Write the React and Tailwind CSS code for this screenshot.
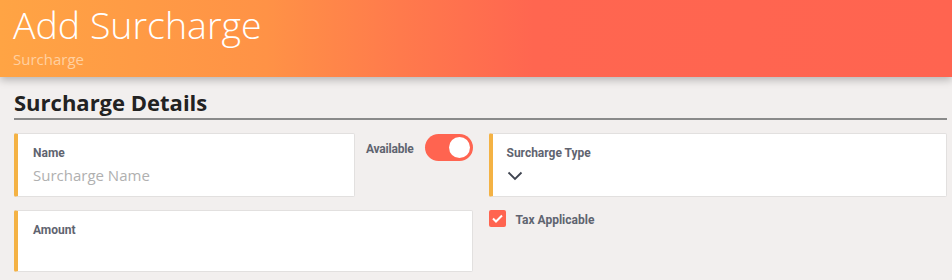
export default function App() {
  return (
    <div className="w-[952px] h-[280px] bg-[#f2efee] overflow-hidden font-['Open_Sans',sans-serif]">
      <div className="h-[77px] bg-[linear-gradient(90deg,#ffa444_0%,#ff9246_28%,#ff7a4c_42%,#ff6650_56%,#ff6450_100%)] shadow-[0_3px_8px_rgba(0,0,0,0.25)] px-[13px] pt-[6px] relative z-10">
        <h1 className="text-[37.5px] font-light text-white leading-[38px]">Add Surcharge</h1>
        <div className="text-[15px] text-[#ffd0a0] leading-[18px] mt-[6px]">Surcharge</div>
      </div>

      <div className="pl-[14px] pr-[5px] pt-[12px]">
        <h2 className="text-[22px] font-bold text-[#222] leading-[27px] pb-[2px] border-b-2 border-[#8a8a8a]">
          Surcharge Details
        </h2>

        <div className="grid grid-cols-2 gap-x-[16px] gap-y-[13px] mt-[13px] font-['Roboto',sans-serif]">
          <div className="flex justify-between">
            <div className="w-[341px] h-[64px] bg-white border border-[#e2e0df] border-l-4 border-l-[#f4b244] rounded-[2px] pl-[15px] pt-[12px]">
              <div className="text-[12px] font-bold text-[#5f6470] leading-[14px]">Name</div>
              <div className="text-[15px] text-[#b0b0b0] leading-[20px] mt-[5px] font-['Open_Sans',sans-serif]">Surcharge Name</div>
            </div>
            <div className="flex items-start gap-[11px] pt-[1px]">
              <span className="text-[12px] font-bold text-[#5f6470] leading-[14px] mt-[8px] tracking-[-0.2px]">Available</span>
              <div className="w-[48px] h-[27px] rounded-full bg-[#ff6450] flex items-center justify-end pr-[3px]">
                <div className="w-[21px] h-[21px] rounded-full bg-white"></div>
              </div>
            </div>
          </div>

          <div className="h-[64px] bg-white border border-[#e2e0df] border-l-4 border-l-[#f4b244] rounded-[2px] pl-[14px] pt-[12px]">
            <div className="text-[12px] font-bold text-[#5f6470] leading-[14px]">Surcharge Type</div>
            <svg className="mt-[11px]" width="16" height="10" viewBox="0 0 16 10" fill="none">
              <path d="M1.5 1.5 L8 8 L14.5 1.5" stroke="#3f4450" strokeWidth="1.8" />
            </svg>
          </div>

          <div className="h-[62px] bg-white border border-[#e2e0df] border-l-4 border-l-[#f4b244] rounded-[2px] pl-[15px] pt-[12px]">
            <div className="text-[12px] font-bold text-[#5f6470] leading-[14px]">Amount</div>
          </div>

          <div className="flex items-start gap-[10px]">
            <div className="w-[17px] h-[17px] bg-[#ff6450] rounded-[2px] flex items-center justify-center">
              <svg width="11" height="9" viewBox="0 0 11 9" fill="none">
                <path d="M1 4.5 L4 7.5 L10 1.5" stroke="white" strokeWidth="2" />
              </svg>
            </div>
            <span className="text-[12px] font-bold text-[#5f6470] leading-[14px] mt-[3px]">Tax Applicable</span>
          </div>
        </div>
      </div>
    </div>
  );
}
